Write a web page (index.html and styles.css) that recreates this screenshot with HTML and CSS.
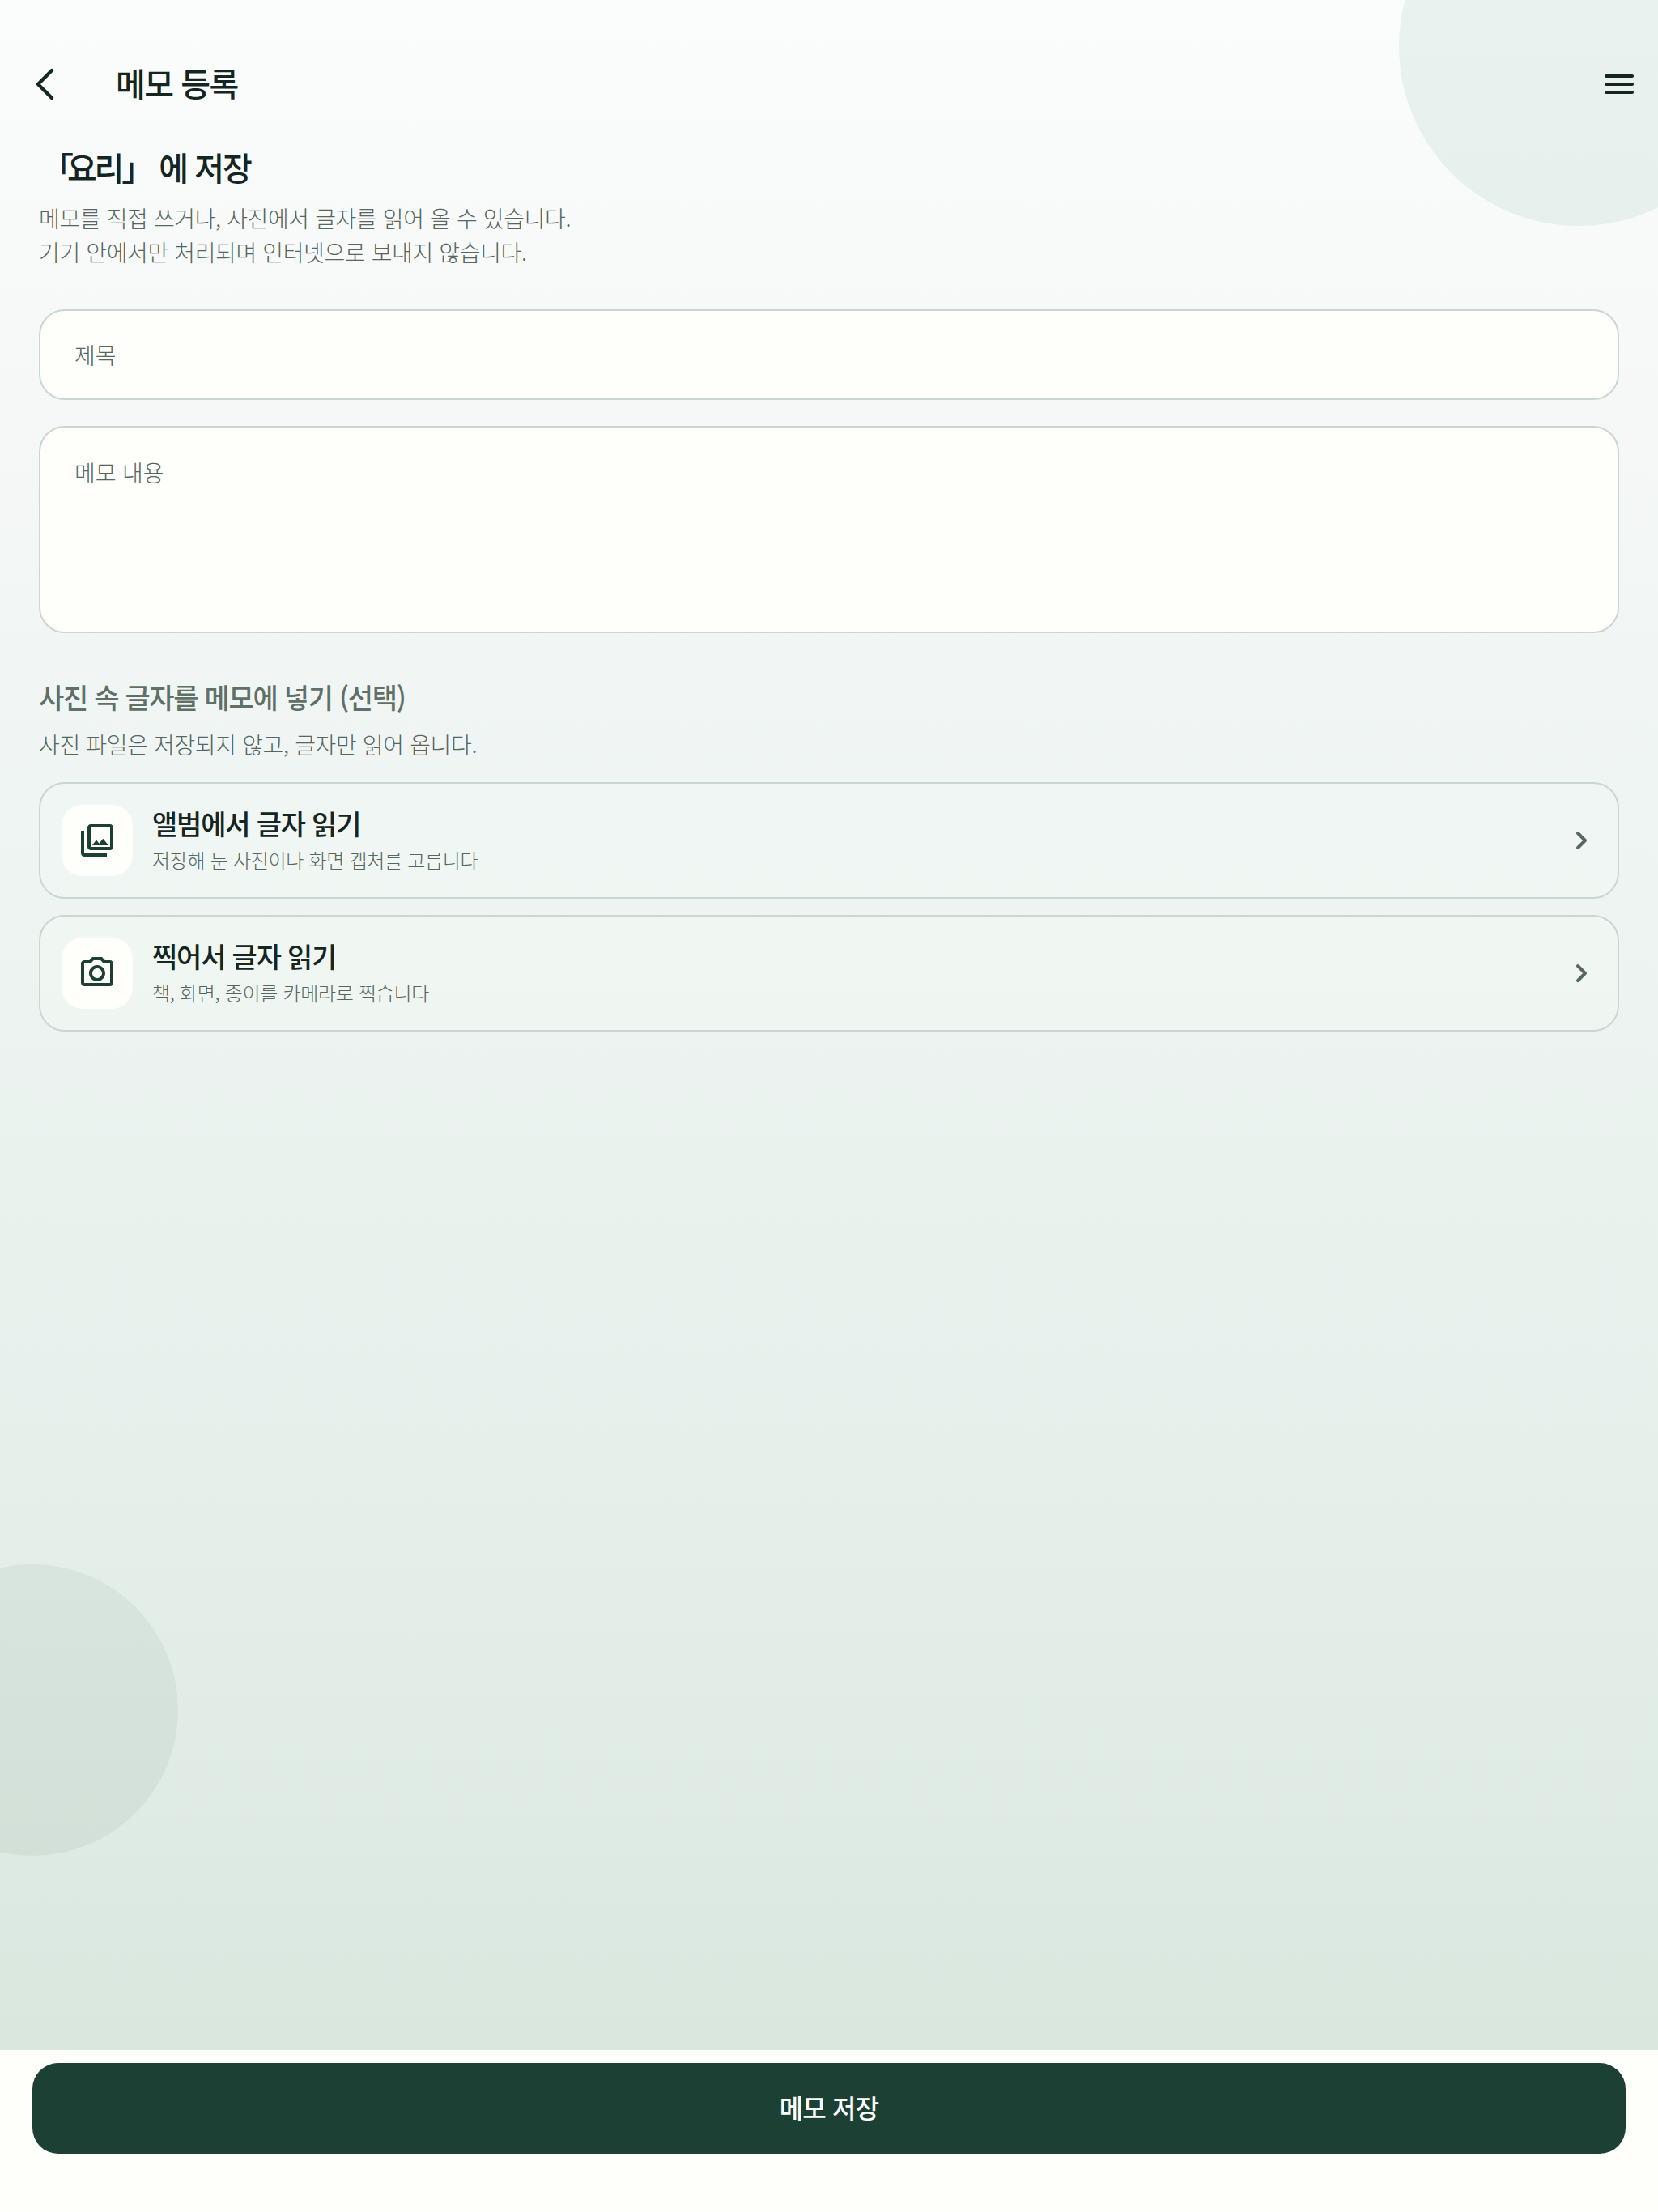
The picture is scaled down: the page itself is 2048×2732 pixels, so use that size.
FILE: index.html
```html
<!DOCTYPE html>
<html lang="ko">
<head>
    <meta charset="UTF-8">
    <meta name="viewport" content="width=device-width, initial-scale=1.0">
    <title>메모 등록</title>
    <link rel="stylesheet" href="styles.css">
</head>
<body>
    <div class="screen">
        <main class="content">
            <div class="circle circle-top"></div>
            <div class="circle circle-bottom"></div>

            <header class="app-bar">
                <button class="icon-btn" aria-label="뒤로">
                    <svg width="48" height="48" viewBox="0 0 48 48" fill="none" stroke="currentColor" stroke-width="4.4" stroke-linecap="round" stroke-linejoin="round"><polyline points="32,7 15,24 32,41"/></svg>
                </button>
                <div class="app-title">메모 등록</div>
                <button class="icon-btn" aria-label="메뉴">
                    <svg width="48" height="48" viewBox="0 0 48 48" fill="none" stroke="currentColor" stroke-width="4.2" stroke-linecap="round"><line x1="8" y1="14" x2="40" y2="14"/><line x1="8" y1="24" x2="40" y2="24"/><line x1="8" y1="34" x2="40" y2="34"/></svg>
                </button>
            </header>

            <section class="form">
                <h1><span class="tag"><span class="tag-open">「</span>요리」</span> 에 저장</h1>
                <p class="desc">메모를 직접 쓰거나, 사진에서 글자를 읽어 올 수 있습니다.<br>기기 안에서만 처리되며 인터넷으로 보내지 않습니다.</p>

                <input class="field" type="text" placeholder="제목">
                <textarea class="field field-body" placeholder="메모 내용"></textarea>

                <h2>사진 속 글자를 메모에 넣기 (선택)</h2>
                <p class="hint">사진 파일은 저장되지 않고, 글자만 읽어 옵니다.</p>

                <div class="option">
                    <div class="option-icon">
                        <svg width="48" height="48" viewBox="0 0 24 24" fill="currentColor"><path d="M20 4v12H8V4h12m0-2H8c-1.1 0-2 .9-2 2v12c0 1.1.9 2 2 2h12c1.1 0 2-.9 2-2V4c0-1.1-.9-2-2-2zm-8.5 9.67l1.69 2.26 2.48-3.1L19 15H9zM2 6v14c0 1.1.9 2 2 2h14v-2H4V6H2z"/></svg>
                    </div>
                    <div class="option-text">
                        <div class="option-title">앨범에서 글자 읽기</div>
                        <div class="option-sub">저장해 둔 사진이나 화면 캡처를 고릅니다</div>
                    </div>
                    <svg class="chevron" width="24" height="32" viewBox="0 0 24 32" fill="none" stroke="currentColor" stroke-width="4" stroke-linecap="round" stroke-linejoin="round"><polyline points="7,7 16,16 7,25"/></svg>
                </div>

                <div class="option">
                    <div class="option-icon">
                        <svg width="48" height="48" viewBox="0 0 24 24" fill="currentColor"><path d="M14.12 4l1.83 2H20v12H4V6h4.05l1.83-2h4.24M15 2H9L7.17 4H4c-1.1 0-2 .9-2 2v12c0 1.1.9 2 2 2h16c1.1 0 2-.9 2-2V6c0-1.1-.9-2-2-2h-3.17L15 2zm-3 7c1.65 0 3 1.35 3 3s-1.35 3-3 3-3-1.35-3-3 1.35-3 3-3m0-2c-2.76 0-5 2.24-5 5s2.24 5 5 5 5-2.24 5-5-2.24-5-5-5z"/></svg>
                    </div>
                    <div class="option-text">
                        <div class="option-title">찍어서 글자 읽기</div>
                        <div class="option-sub">책, 화면, 종이를 카메라로 찍습니다</div>
                    </div>
                    <svg class="chevron" width="24" height="32" viewBox="0 0 24 32" fill="none" stroke="currentColor" stroke-width="4" stroke-linecap="round" stroke-linejoin="round"><polyline points="7,7 16,16 7,25"/></svg>
                </div>
            </section>
        </main>

        <footer class="bottom-bar">
            <button class="save-btn">메모 저장</button>
        </footer>
    </div>
</body>
</html>
```
FILE: styles.css
```css
* {
    margin: 0;
    padding: 0;
    box-sizing: border-box;
    font-family: "Noto Sans CJK KR", "Noto Sans", sans-serif;
}

body {
    background: #fefefa;
}

.screen {
    height: 2732px;
    display: flex;
    flex-direction: column;
    overflow: hidden;
}

.content {
    position: relative;
    flex: 1;
    overflow: hidden;
    background: linear-gradient(180deg, #fbfcfc 0%, #f6f8f8 20%, #f1f6f4 32%, #e5efea 75%, #d9e7df 100%);
}

.circle {
    position: absolute;
    border-radius: 50%;
}

.circle-top {
    top: -165px;
    right: -124px;
    width: 444px;
    height: 444px;
    background: rgba(80, 160, 130, 0.1);
}

.circle-bottom {
    top: 1932px;
    left: -140px;
    width: 360px;
    height: 360px;
    background: rgba(28, 64, 52, 0.06);
}

.app-bar {
    position: relative;
    display: flex;
    align-items: center;
    height: 88px;
    margin-top: 60px;
    padding: 0 24px 0 32px;
}

.icon-btn {
    display: flex;
    background: none;
    border: none;
    color: #14261f;
}

.app-title {
    flex: 1;
    margin-left: 63px;
    padding-bottom: 4px;
    color: #14261f;
    font-size: 40px;
    font-weight: 500;
    letter-spacing: -1.5px;
}

.form {
    position: relative;
    padding: 30px 48px 0;
}

h1 {
    color: #14261f;
    font-size: 40px;
    font-weight: 500;
    line-height: 56px;
    letter-spacing: -2px;
}

.tag {
    letter-spacing: -3.2px;
}

.tag-open {
    margin-left: 3px;
    letter-spacing: -8px;
}

.desc {
    margin-top: 14px;
    color: #55675e;
    font-size: 28px;
    font-weight: 300;
    line-height: 42px;
    letter-spacing: -0.37px;
}

.field {
    display: block;
    width: 100%;
    height: 112px;
    margin-top: 50px;
    padding: 0 42px;
    background: #fefefa;
    border: 2px solid #c8d8d0;
    border-radius: 32px;
    color: #14261f;
    font-size: 28px;
    font-weight: 300;
    letter-spacing: -0.1px;
    outline: none;
    resize: none;
}

.field::placeholder {
    color: #55675e;
    opacity: 1;
}

.field-body {
    height: 256px;
    margin-top: 32px;
    padding-top: 35px;
    line-height: 40px;
}

h2 {
    margin-top: 55px;
    color: #5e7067;
    font-size: 34px;
    font-weight: 500;
    line-height: 48px;
    letter-spacing: -1.3px;
}

.hint {
    margin-top: 14px;
    margin-bottom: 27px;
    color: #55675e;
    font-size: 28px;
    font-weight: 300;
    line-height: 40px;
    letter-spacing: -0.35px;
}

.option {
    display: flex;
    align-items: center;
    height: 144px;
    margin-bottom: 20px;
    padding: 0 26px;
    background: rgba(240, 246, 243, 0.8);
    border: 2px solid #c8d8d0;
    border-radius: 32px;
}

.option-icon {
    display: flex;
    align-items: center;
    justify-content: center;
    width: 88px;
    height: 88px;
    background: #fefefa;
    border-radius: 26px;
    color: #1c4034;
}

.option-text {
    flex: 1;
    margin-left: 24px;
    padding-bottom: 4px;
}

.option-title {
    color: #14261f;
    font-size: 34px;
    font-weight: 500;
    line-height: 50px;
    letter-spacing: -1.2px;
}

.option-sub {
    margin-top: 2px;
    color: #55675e;
    font-size: 24px;
    font-weight: 300;
    line-height: 36px;
    letter-spacing: -0.3px;
}

.chevron {
    margin-right: 6px;
    color: #56675f;
}

.bottom-bar {
    height: 200px;
    padding: 16px 40px 0;
    background: #fefefa;
}

.save-btn {
    display: block;
    width: 100%;
    height: 112px;
    padding-bottom: 5px;
    background: #1c4034;
    border: none;
    border-radius: 32px;
    color: #fefefa;
    font-size: 32px;
    font-weight: 500;
    letter-spacing: -0.8px;
}
```
